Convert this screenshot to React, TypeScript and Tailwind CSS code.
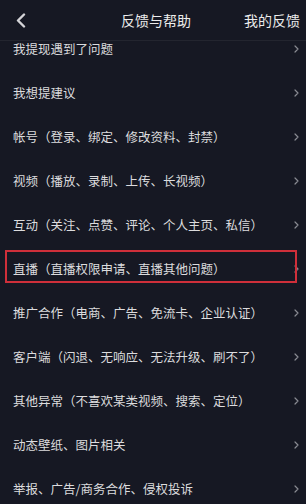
import React from "react";

const rows = [
  "我提现遇到了问题",
  "我想提建议",
  "帐号（登录、绑定、修改资料、封禁）",
  "视频（播放、录制、上传、长视频）",
  "互动（关注、点赞、评论、个人主页、私信）",
  "直播（直播权限申请、直播其他问题）",
  "推广合作（电商、广告、免流卡、企业认证）",
  "客户端（闪退、无响应、无法升级、刷不了）",
  "其他异常（不喜欢某类视频、搜索、定位）",
  "动态壁纸、图片相关",
  "举报、广告/商务合作、侵权投诉",
];

function Chevron() {
  return (
    <svg width="5" height="8" viewBox="0 0 5 8" className="shrink-0">
      <path d="M1 1 L4 4 L1 7" fill="none" stroke="#8a8b92" strokeWidth="1.2" strokeLinecap="round" strokeLinejoin="round" />
    </svg>
  );
}

export default function App() {
  return (
    <div
      className="w-[306px] h-[504px] overflow-hidden bg-[#161823] flex flex-col"
      style={{ fontFamily: '"Noto Sans CJK SC", "Noto Sans", sans-serif' }}
    >
      <div className="h-[41px] shrink-0 bg-[#161823] border-b border-[#23252f] flex items-center">
        <div className="w-[121px] pl-[16px] flex items-center">
          <svg width="10" height="15" viewBox="0 0 10 15">
            <path d="M8 1.5 L2 7.5 L8 13.5" fill="none" stroke="#d4d4d8" strokeWidth="2.4" strokeLinecap="round" strokeLinejoin="round" />
          </svg>
        </div>
        <div className="text-[14px] text-[#ececec] leading-none">反馈与帮助</div>
        <div className="flex-1" />
        <div className="text-[14px] text-[#ececec] leading-none pr-[6px]">我的反馈</div>
      </div>
      <div className="flex-1 overflow-hidden flex flex-col">
        {rows.map((r, i) => (
          <div
            key={i}
            className={
              i === 0
                ? "relative h-[30px] pb-[14px] shrink-0 flex items-center justify-between pl-[13px] pr-[7px]"
                : "relative h-[44px] shrink-0 flex items-center justify-between pl-[13px] pr-[7px]"
            }
          >
            <span className="text-[12.5px] text-[#dcdcde] leading-none">{r}</span>
            <Chevron />
            {i === 5 && (
              <div className="absolute left-[5px] right-[9px] top-[3px] h-[33px] border-2 border-[#cf2f3a]" />
            )}
          </div>
        ))}
      </div>
    </div>
  );
}
